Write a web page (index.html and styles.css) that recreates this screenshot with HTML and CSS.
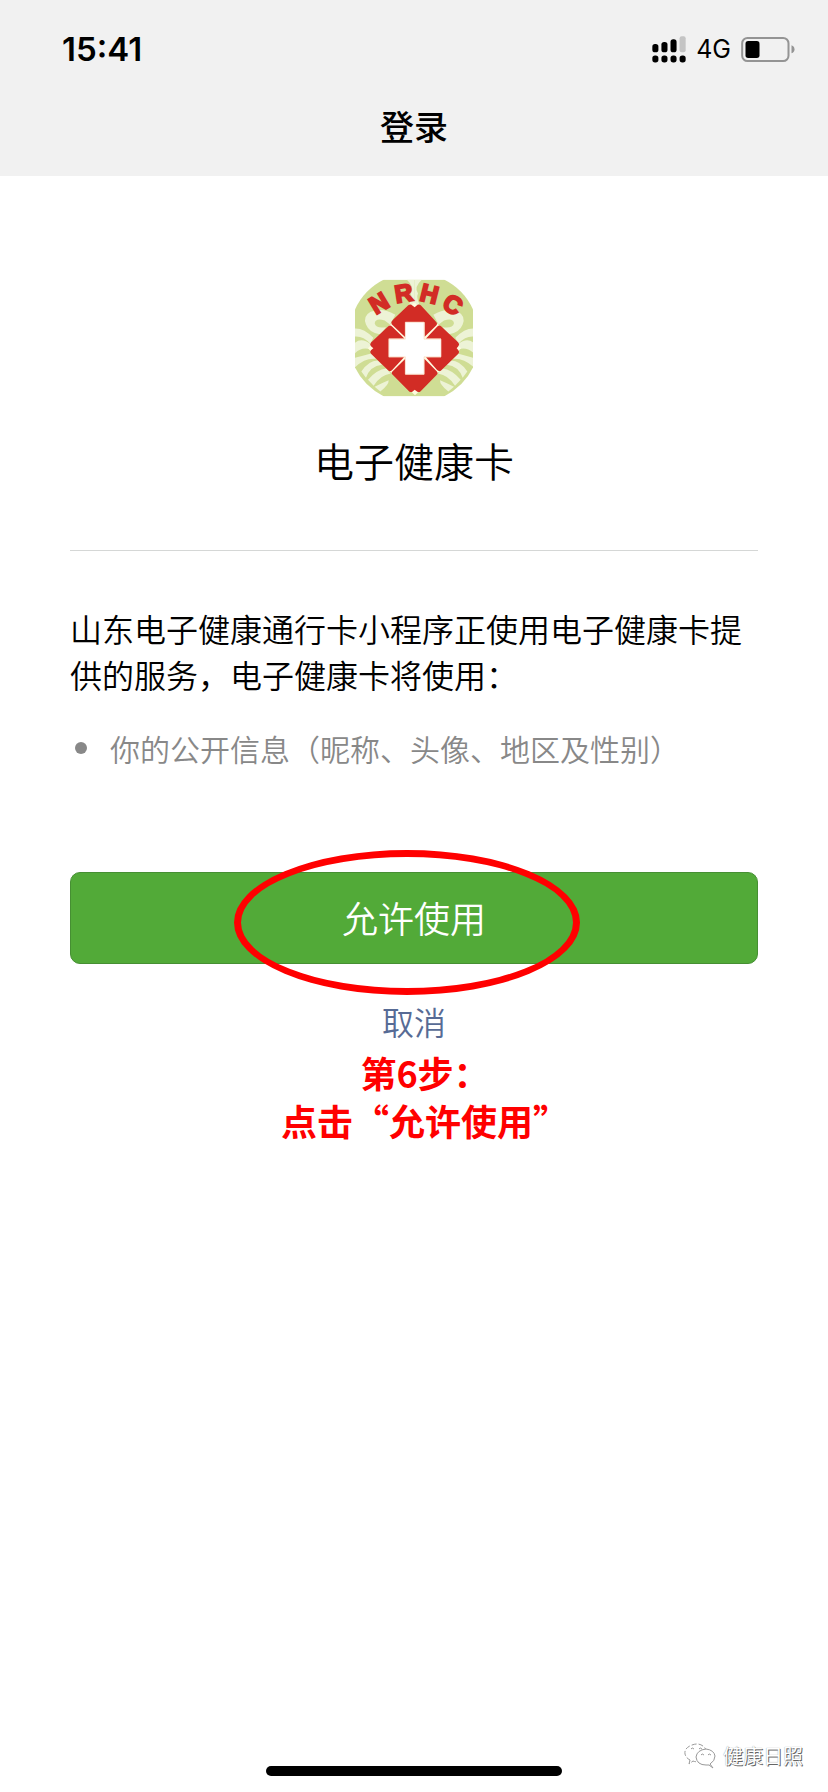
FILE: index.html
```
<!DOCTYPE html>
<html lang="zh-CN">
<head>
    <meta charset="UTF-8">
    <meta name="viewport" content="width=device-width, initial-scale=1">
    <title>登录</title>
    <link rel="stylesheet" href="styles.css">
</head>
<body>
    <header class="header">
        <div class="status">
            <span class="time">15:41</span>
            <div class="status-right">
                <svg class="signal" viewBox="98 75 101 79">
                    <rect x="99" y="98" width="18" height="25" rx="8"/>
                    <rect x="126" y="92" width="18" height="31" rx="8"/>
                    <rect x="153" y="84" width="18" height="39" rx="8"/>
                    <rect x="180" y="75" width="18" height="48" rx="6" fill="#c4c4c4"/>
                    <rect x="99" y="132" width="18" height="21" rx="8"/>
                    <rect x="126" y="132" width="18" height="21" rx="8"/>
                    <rect x="153" y="132" width="18" height="21" rx="8"/>
                    <rect x="180" y="132" width="18" height="21" rx="8"/>
                </svg>
                <span class="network">4G</span>
                <svg class="battery" viewBox="362 81 161 75">
                    <rect x="365" y="84" width="139" height="69" rx="16" fill="none" stroke="#949494" stroke-width="6"/>
                    <rect x="375" y="93" width="42" height="51" rx="8"/>
                    <path d="M513 106 Q522 109 522 118 Q522 127 513 130 Z" fill="#949494"/>
                </svg>
            </div>
        </div>
        <h1 class="nav-title">登录</h1>
    </header>

    <main class="main">
        <div class="app">
            <svg class="logo" viewBox="45 42 354 351">
                <clipPath id="clip">
                    <path d="M132 42 H312 Q372 72 399 132 V306 Q372 362 312 393 H132 Q72 362 45 306 V132 Q72 72 132 42 Z"/>
                </clipPath>
                <g clip-path="url(#clip)">
                    <rect x="45" y="42" width="354" height="351" fill="#cfdd94"/>
                    <g id="leaf" fill="#edf3d6">
                        <path d="M166 148 Q128 124 92 139 Q68 152 78 177 Q88 203 122 207 L138 185 Q108 190 104 173 Q107 156 134 165 L150 177 Z"/>
                        <path d="M45 189 Q72 188 100 217 L91 235 Q70 211 45 213 Z"/>
                        <path d="M45 232 Q66 215 92 237 L91 252 Q66 243 45 263 Z"/>
                        <path d="M45 277 Q70 270 96 263 L108 280 Q76 276 45 305 Z"/>
                        <path d="M64 318 Q87 284 114 285 L126 298 Q90 302 78 337 Z"/>
                        <path d="M84 343 Q110 312 139 309 L152 324 Q120 329 101 361 Z"/>
                        <path d="M104 364 Q128 351 146 344 Q147 357 121 378 Z"/>
                        <path d="M200 42 H223 V118 H207 Q218 96 212 84 Q226 66 200 42 Z"/>
                    </g>
                    <use href="#leaf" transform="translate(446 0) scale(-1 1)"/>
                    <path fill="#fffbe0" d="M223 110 L298 180 L363 248 L298 318 L225 389 L150 318 L84 248 L150 178 Z"/>
                    <g fill="#d22c25">
                        <path d="M155 176 Q152 169 159 163 L204 120 Q211 114 217 120 L224 125 L230 120 Q237 114 243 120 L288 169 Q294 175 288 181 L254 214 V170 H196 V215 Z"/>
                        <path d="M144 183 Q150 177 156 183 L193 219 H146 V275 H192 L158 312 Q151 321 145 315 L93 265 Q88 259 93 254 L100 248 L93 242 Q88 237 93 231 Z"/>
                        <path d="M304 183 Q298 177 292 183 L258 219 H303 V275 H258 L290 312 Q298 320 304 314 L355 265 Q360 259 355 254 L350 248 L355 242 Q360 237 355 231 Z"/>
                        <path d="M196 280 V327 H253 V280 L290 317 Q296 323 289 329 L242 377 Q237 382 231 378 L224 373 L218 378 Q212 382 207 377 L158 328 Q152 322 158 317 Z"/>
                    </g>
                    <path d="M196 170 H252 V221 H303 V274 H252 V326 H196 V274 H147 V221 H196 Z" fill="#fff" stroke="#fbd9c4" stroke-width="2"/>
                </g>
                <g class="logo-text">
                    <text transform="translate(130 135) rotate(-31)">N</text>
                    <text transform="translate(195 108) rotate(-9)">R</text>
                    <text transform="translate(262 110) rotate(14)">H</text>
                    <text transform="translate(325 139) rotate(32)">C</text>
                </g>
            </svg>
            <h2 class="app-name">电子健康卡</h2>
        </div>

        <p class="desc">山东电子健康通行卡小程序正使用电子健康卡提供的服务，电子健康卡将使用：</p>
        <ul class="scope">
            <li>你的公开信息（昵称、头像、地区及性别）</li>
        </ul>

        <div class="action">
            <button type="button" class="btn-allow">允许使用</button>
            <div class="circle"></div>
        </div>
        <a class="cancel" href="#">取消</a>
        <p class="tip">第6步：<br>点击“允许使用”</p>
    </main>

    <footer class="footer">
        <div class="home-bar"></div>
        <div class="watermark">
            <svg class="wechat" viewBox="0 0 32 26" fill="#fff" stroke="#999" stroke-width="1">
                <path stroke-dasharray="5 2" d="M6 17 L5 21 L9 18 Q14 20 18 17 Q25 12 21 5 Q16 -1 8 2 Q0 5 1 11 Q2 15 6 17 Z"/>
                <path d="M26 21 Q31 18 31 13 Q30 7 22 6 Q13 7 12 14 Q13 22 22 22 L25 22 L29 25 Z"/>
                <path fill="none" d="M7 6 Q8 4 10 6 M15 6 Q16 4 18 6 M17 12 Q18 10 20 12 M24 12 Q25 10 27 12"/>
            </svg>
            <span>健康日照</span>
        </div>
    </footer>
</body>
</html>
```

FILE: styles.css
```
*{
    margin: 0;
    padding: 0;
    box-sizing: border-box;
}
body{
    display: flex;
    flex-direction: column;
    min-height: 100vh;
    background-color: #fff;
    color: #000;
    font-family: "Noto Sans CJK SC", sans-serif;
}
ul{
    list-style: none;
}

/* 顶部 */
.header{
    padding-bottom: 22px;
    background-color: #f1f1f1;
}
.status{
    display: flex;
    justify-content: space-between;
    align-items: center;
    height: 98px;
    padding: 0 33px 0 62px;
    font-family: Inter, sans-serif;
}
.time{
    font-size: 33px;
    font-weight: 600;
}
.status-right{
    display: flex;
    align-items: center;
    gap: 10px;
}
.signal{
    width: 34px;
    height: 27px;
}
.network{
    font-size: 25px;
}
.battery{
    width: 54px;
    height: 25px;
}
.nav-title{
    font-size: 34px;
    font-weight: 500;
    line-height: 56px;
    text-align: center;
}

/* 授权内容 */
.main{
    flex: 1;
    padding: 103px 70px 0;
}
.app{
    padding-bottom: 63px;
    border-bottom: 1px solid #d5d7d6;
    text-align: center;
}
.logo{
    display: block;
    width: 118px;
    height: 118px;
    margin: 0 auto 36px;
}
.logo-text{
    fill: #d22c25;
    stroke: #d22c25;
    stroke-width: 6px;
    font-family: "Liberation Sans", sans-serif;
    font-size: 74px;
    font-weight: bold;
    text-anchor: middle;
}
.app-name{
    font-size: 40px;
    font-weight: 350;
    line-height: 54px;
}
.desc{
    margin-top: 54px;
    font-size: 32px;
    font-weight: 350;
    line-height: 46px;
}
.scope{
    margin-top: 28px;
    color: #888;
    font-size: 30px;
    font-weight: 350;
    line-height: 46px;
}
.scope li{
    display: flex;
    align-items: center;
}
.scope li::before{
    content: "";
    width: 12px;
    height: 12px;
    margin: 0 23px 0 5px;
    border-radius: 50%;
    background-color: #888;
}
.action{
    position: relative;
    margin-top: 101px;
}
.btn-allow{
    display: block;
    width: 100%;
    height: 92px;
    padding-bottom: 2px;
    border: 1px solid #468f33;
    border-radius: 10px;
    background-color: #52aa38;
    color: #fff;
    font-family: inherit;
    font-size: 36px;
    font-weight: 350;
    cursor: pointer;
}
.circle{
    position: absolute;
    top: -22px;
    left: calc(50% - 180px);
    width: 346px;
    height: 145px;
    border: 7px solid #f00;
    border-radius: 50%;
    pointer-events: none;
}
.cancel{
    display: block;
    width: 64px;
    margin: 34px auto 0;
    color: #576b95;
    font-size: 32px;
    font-weight: 350;
    line-height: 46px;
    text-align: center;
    text-decoration: none;
}
.tip{
    margin-top: 4px;
    padding-left: 22px;
    color: #f00;
    font-size: 36px;
    font-weight: bold;
    line-height: 48px;
    text-align: center;
}

/* 底部 */
.footer{
    position: relative;
    padding-bottom: 16px;
}
.home-bar{
    width: 296px;
    height: 10px;
    margin: 0 auto;
    border-radius: 5px;
    background-color: #000;
}
.watermark{
    position: absolute;
    right: 25px;
    bottom: 20px;
    display: flex;
    align-items: center;
    gap: 7px;
    color: #fff;
    font-size: 20px;
    line-height: 32px;
    text-shadow: 1px 1px 0 #666, 0 0 1px #888;
}
.wechat{
    width: 32px;
    height: 26px;
}
```
